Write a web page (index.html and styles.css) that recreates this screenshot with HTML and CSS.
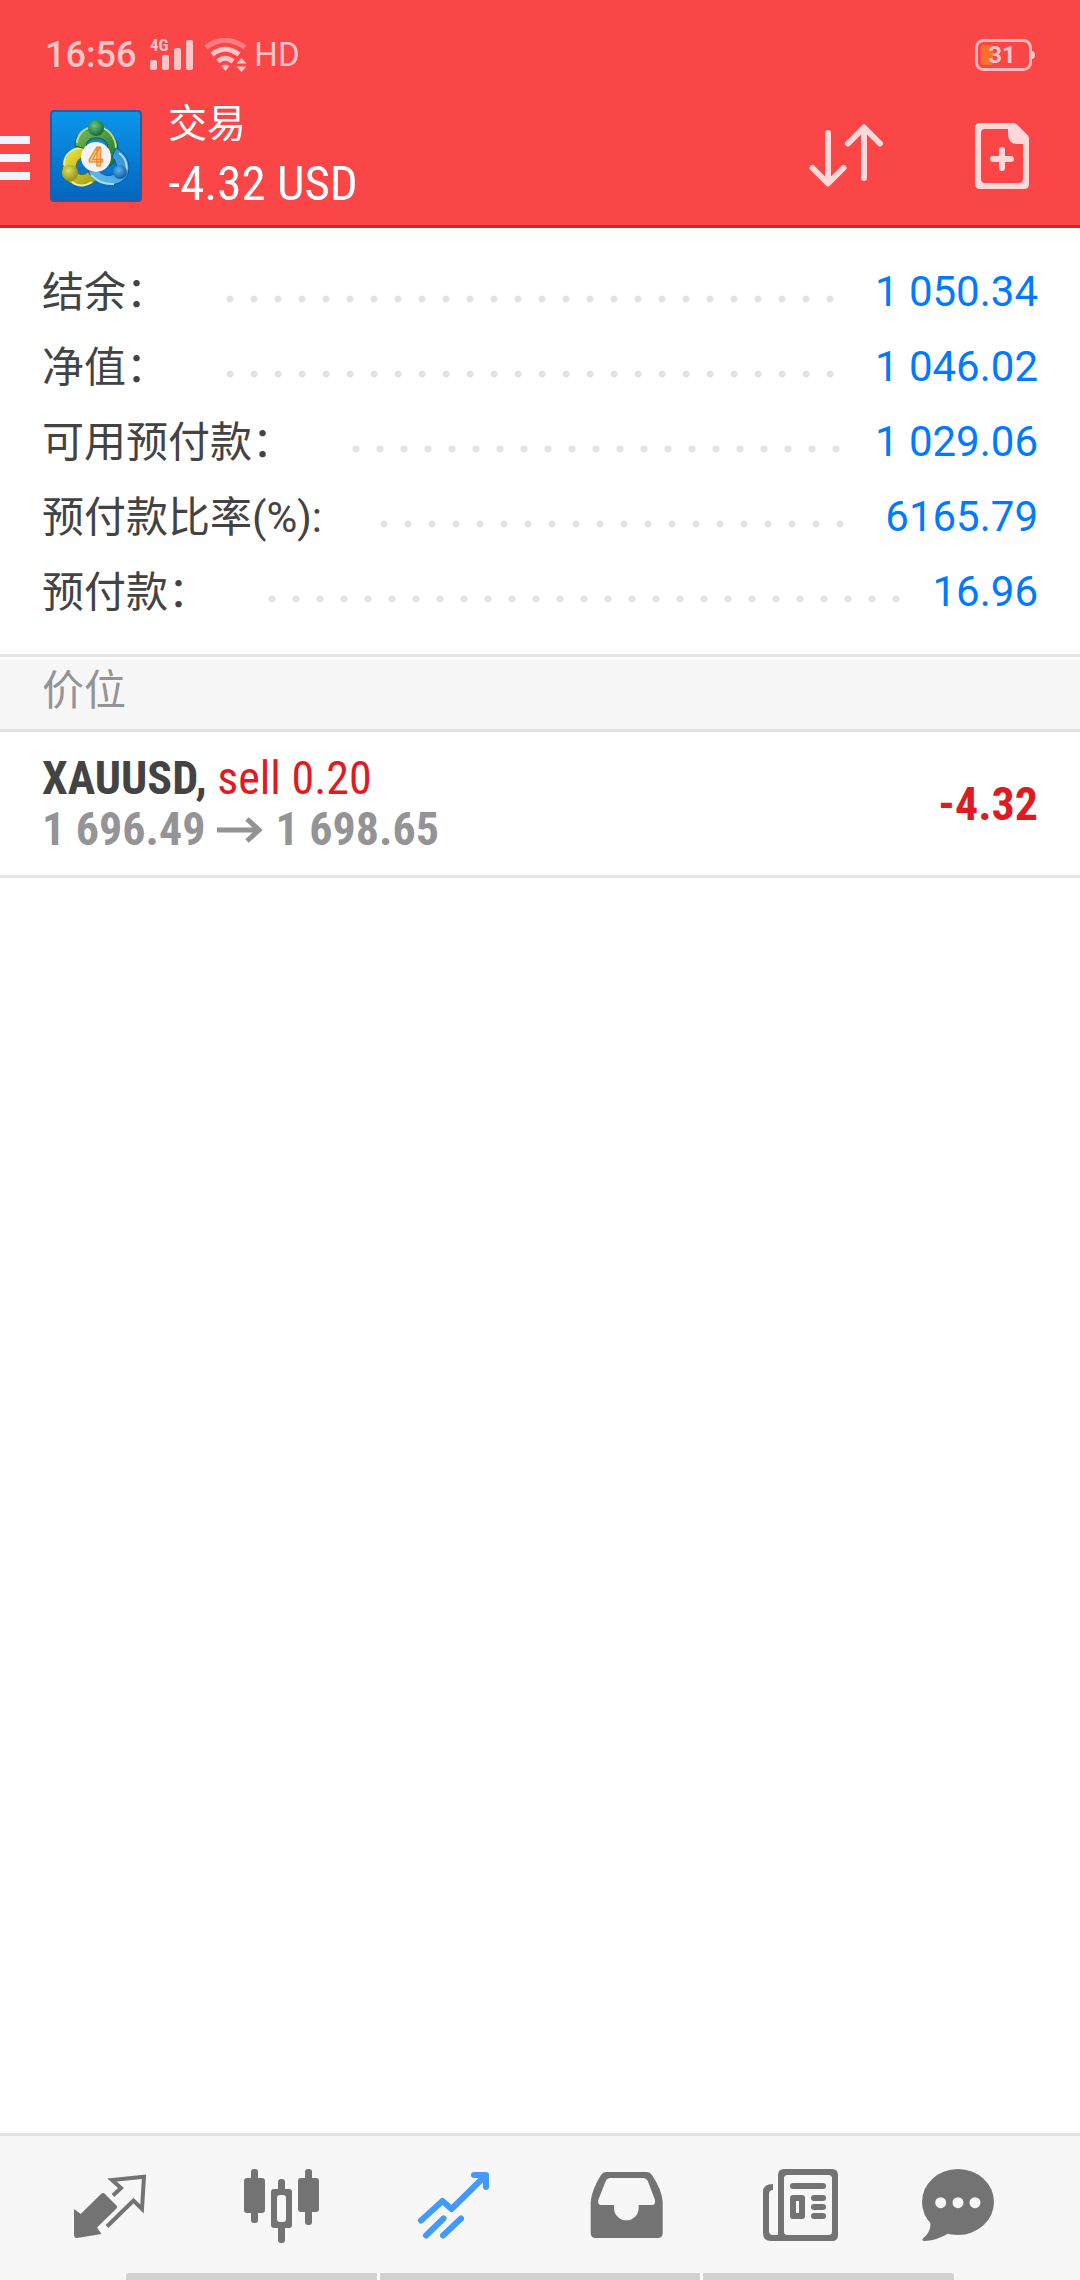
FILE: index.html
```html
<!DOCTYPE html>
<html lang="zh-CN">
<head>
<meta charset="utf-8">
<meta name="viewport" content="width=device-width, initial-scale=1">
<title>交易</title>
<link rel="stylesheet" href="styles.css">
</head>
<body>
<div class="app">
  <header class="header">
    <div class="status">
      <span class="status-time">16:56</span>
      <svg class="status-signal" viewBox="0 -5 44 42" aria-hidden="true">
        <text x="0" y="12" class="signal-label">4G</text>
        <rect x="0" y="21" width="7" height="10" rx="2"/>
        <rect x="12" y="16" width="7" height="15" rx="2"/>
        <rect x="24" y="9" width="7" height="22" rx="2"/>
        <rect x="36" y="1" width="7" height="30" rx="2"/>
      </svg>
      <svg class="status-wifi" viewBox="0 0 44 34" aria-hidden="true">
        <path class="wifi-weak" d="M2 9.500Q21 -5 41 9.500"/>
        <path class="wifi-arc" d="M8 16.500Q21 6 35 16.500"/>
        <path class="wifi-arc" d="M14 23.500Q21 17 29 23.500"/>
        <path d="M17.500 28Q21.500 25.500 25.500 28L21.500 33ZM32.500 25.500L37.500 20L42.500 25.500ZM32.500 28.500H42.500L37.500 34Z"/>
      </svg>
      <span class="status-hd">HD</span>
      <svg class="status-battery" viewBox="0 0 60 34" aria-label="31%">
        <rect x="6" y="7" width="12" height="20" rx="2" class="battery-level"/>
        <rect x="1.500" y="2.500" width="54" height="29" rx="7" class="battery-shell"/>
        <path d="M57 13Q60 13.500 60 17T57 21Z"/>
        <text x="27" y="25" text-anchor="middle" class="battery-text">31</text>
      </svg>
    </div>
    <div class="toolbar">
      <button class="menu-button" type="button" aria-label="菜单"><span class="menu-line"></span><span class="menu-line"></span><span class="menu-line"></span></button>
      <svg class="logo" viewBox="0 0 92 92" aria-hidden="true">
        <defs>
          <linearGradient id="sky" x1="0" y1="0" x2="0" y2="1"><stop offset="0" stop-color="#0a97ea"/><stop offset="1" stop-color="#0565bd"/></linearGradient>
          <linearGradient id="green" x1="0" y1="0" x2="1" y2="1"><stop offset="0" stop-color="#79bd5a"/><stop offset="1" stop-color="#17702e"/></linearGradient>
          <linearGradient id="yellow" x1="0" y1="0" x2="1" y2="1"><stop offset="0" stop-color="#f3e83c"/><stop offset="1" stop-color="#9c9b1b"/></linearGradient>
          <linearGradient id="blue" x1="1" y1="0" x2="0" y2="1"><stop offset="0" stop-color="#288cd8"/><stop offset="1" stop-color="#6cc0f0"/></linearGradient>
          <radialGradient id="greenBall" cx=".4" cy=".35" r=".7"><stop offset="0" stop-color="#6cc486"/><stop offset="1" stop-color="#14632b"/></radialGradient>
          <radialGradient id="yellowBall" cx=".4" cy=".35" r=".7"><stop offset="0" stop-color="#dfdf62"/><stop offset="1" stop-color="#8b8a14"/></radialGradient>
          <radialGradient id="blueBall" cx=".4" cy=".35" r=".7"><stop offset="0" stop-color="#5bb4ee"/><stop offset="1" stop-color="#0a569f"/></radialGradient>
        </defs>
        <rect x="1" y="1" width="90" height="90" rx="3" fill="url(#sky)" stroke="#2c5a9c" stroke-width="2"/>
        <path d="M36 37C18 37 11 53 13 64C17 77 39 80 46 70L40 59C35 68 26 65 26 58C26 50 32 46 36 46Z" fill="url(#yellow)" stroke="#5c661b"/>
        <path d="M14 55C14 43 24 38 32 38M22 72Q31 79 42 72" fill="none" stroke="#eef0a0" stroke-width="2"/>
        <path d="M25 36C23 14 66 11 68 38C68 48 64 54 59 56L55 48C61 36 57 28 46 28C37 28 36 34 36 39Z" fill="url(#green)" stroke="#155a27"/>
        <path d="M27 33C28 20 39 17 46 17C57 17 66 26 66 39" fill="none" stroke="#b5dc94" stroke-width="2"/>
        <path d="M66 38C77 43 82 56 77 66C70 78 46 79 38 61H49C54 67 64 67 67 61C67 54 65 49 62 47Z" fill="url(#blue)" stroke="#0b579d"/>
        <path d="M69 43Q80 51 75 66M41 65Q50 75 64 74" fill="none" stroke="#aadcf7" stroke-width="2"/>
        <circle cx="46" cy="18" r="8" fill="url(#greenBall)"/>
        <circle cx="20" cy="63" r="8" fill="url(#yellowBall)"/>
        <circle cx="70" cy="62" r="7" fill="url(#blueBall)"/>
        <circle cx="46" cy="47" r="15" fill="#f3f3f5"/>
        <text x="46" y="56" text-anchor="middle" class="logo-text">4</text>
      </svg>
      <div class="heading">
        <h1 class="heading-title">交易</h1>
        <p class="heading-profit">-4.32 USD</p>
      </div>
      <div class="actions">
        <button class="action" type="button" aria-label="排序">
          <svg class="action-icon" viewBox="0 0 80 80" aria-hidden="true"><path class="action-line" d="M22 17V67M6.500 52L22 67.500L37.500 52M58 62V12M42 27.500L58 11.500L74 27.500"/></svg>
        </button>
        <button class="action" type="button" aria-label="新订单">
          <svg class="action-icon" viewBox="0 0 80 80" aria-hidden="true">
            <path class="action-fill" fill-rule="evenodd" d="M18 7H51.500Q53.500 7 55 8.500L65.500 19Q67 20.500 67 22.500V68Q67 73 62 73H18Q13 73 13 68V12Q13 7 18 7ZM23 13Q19 13 19 17V63Q19 67 23 67H57Q61 67 61 63V28H56Q46 28 46 18V13Z"/>
            <path class="action-line" d="M31 43H49M40 34V52"/>
          </svg>
        </button>
      </div>
    </div>
  </header>

  <main class="main">
    <dl class="account">
      <div class="account-row"><dt>结余：</dt><dd>1 050.34</dd></div>
      <div class="account-row"><dt>净值：</dt><dd>1 046.02</dd></div>
      <div class="account-row"><dt>可用预付款：</dt><dd>1 029.06</dd></div>
      <div class="account-row"><dt>预付款比率(%):</dt><dd>6165.79</dd></div>
      <div class="account-row"><dt>预付款：</dt><dd>16.96</dd></div>
    </dl>
    <h2 class="section-title">价位</h2>
    <ul class="orders">
      <li class="order">
        <div class="order-info">
          <p class="order-line"><b class="order-symbol">XAUUSD,</b> <span class="order-side">sell 0.20</span></p>
          <p class="order-line order-prices"><span>1 696.49</span><svg class="order-arrow" viewBox="0 0 46 26" aria-label="至"><path d="M0 13H42M30 2L42 13L30 24"/></svg><span>1 698.65</span></p>
        </div>
        <strong class="order-profit">-4.32</strong>
      </li>
    </ul>
  </main>

  <nav class="tabs">
    <div class="tab-list">
      <button class="tab" type="button" aria-label="行情">
        <svg class="tab-icon" viewBox="0 0 96 96" aria-hidden="true"><path d="M12 49L18.700 54L39 34Q41 32 43 34L54 45Q56 47 54 49L35 67.500L39.500 74L15 78Q12 78 12 75Z"/><path class="thin" d="M51 35.500L59 28L50 20L82 16.700L80 49L71.500 40.500L45 66.500"/></svg>
      </button>
      <button class="tab" type="button" aria-label="图表">
        <svg class="tab-icon" viewBox="0 0 96 96" aria-hidden="true">
          <rect x="10" y="18" width="21" height="35" rx="3"/><rect x="17" y="9" width="7" height="54" rx="3"/>
          <rect x="37" y="29" width="21" height="39" rx="3"/><rect x="44" y="19" width="7" height="64" rx="3"/><rect class="hole" x="43" y="35" width="9" height="27" rx="3"/>
          <rect x="64" y="18" width="21" height="34" rx="3"/><rect x="71" y="9" width="7" height="56" rx="3"/>
        </svg>
      </button>
      <button class="tab tab-active" type="button" aria-label="交易" aria-current="page">
        <svg class="tab-icon" viewBox="0 0 96 96" aria-hidden="true"><path class="thick" d="M15 60.500L36.500 41L45.500 49L78 17"/><path class="thick" d="M68 15H80V27"/><path class="thick" d="M20 75.500L37.500 58.500M37 75.500L55 58.500"/></svg>
      </button>
      <button class="tab" type="button" aria-label="历史">
        <svg class="tab-icon" viewBox="0 0 96 96" aria-hidden="true"><path fill-rule="evenodd" d="M28 12H69Q72 12 74 15Q84 30 84.700 42V73Q84.700 78 79.700 78H17.700Q12.700 78 12.700 73V42Q13.500 30 23 15Q25 12 28 12ZM32 18Q29 18 27.500 21.500L20.300 40Q19.500 45 23 45H36V48A12.300 12.300 0 0 0 60.700 48V45H74Q77.800 45 77 40L70 21.500Q68.500 18 65 18Z"/></svg>
      </button>
      <button class="tab" type="button" aria-label="新闻">
        <svg class="tab-icon" viewBox="0 0 96 96" aria-hidden="true">
          <path fill-rule="evenodd" d="M34 9H82Q88 9 88 15V75Q88 81 82 81H28V15Q28 9 34 9ZM37.500 15Q34 15 34 18.500V71.500Q34 75 37.500 75H78.500Q82 75 82 71.500V18.500Q82 15 78.500 15Z"/>
          <path d="M23 24V30Q19 30 19 34V71Q19 75 23 75H30V81H21Q13 81 13 73V32Q13 24 23 24Z"/>
          <rect x="40" y="23" width="36" height="6" rx="3"/>
          <path fill-rule="evenodd" d="M43 35H52Q55 35 55 38V56Q55 59 52 59H43Q40 59 40 56V38Q40 35 43 35ZM46 41V53H49V41Z"/>
          <rect x="61" y="35" width="15" height="6" rx="3"/><rect x="61" y="44" width="15" height="6" rx="3"/><rect x="61" y="53" width="15" height="6" rx="3"/>
        </svg>
      </button>
      <button class="tab" type="button" aria-label="消息">
        <svg class="tab-icon" viewBox="0 0 96 96" aria-hidden="true"><ellipse cx="36" cy="42" rx="36" ry="33"/><path d="M8.500 63Q9 72 1 78.500Q-1 81 3 81Q16 80 27 73L20 60L7 60Z"/><circle class="hole" cx="18.700" cy="42.700" r="5.500"/><circle class="hole" cx="36" cy="42.700" r="5.500"/><circle class="hole" cx="53" cy="42.700" r="5.500"/></svg>
      </button>
    </div>
    <div class="gesture-hints" aria-hidden="true"><span class="hint"></span><span class="hint"></span><span class="hint"></span></div>
  </nav>
</div>
</body>
</html>
```
FILE: styles.css
```css
* {
  box-sizing: border-box;
}

body,
h1,
h2,
p,
dl,
dd,
ul {
  margin: 0;
  padding: 0;
}

body {
  background: #fff;
  color: #434343;
  font-family: Roboto, "Noto Sans CJK SC", sans-serif;
  font-size: 42px;
}

button {
  padding: 0;
  border: 0;
  background: none;
}

svg {
  display: block;
  flex: none;
}

.app {
  display: flex;
  flex-direction: column;
  min-height: 100vh;
}

/* Header */

.header {
  background: #fb4648;
  border-bottom: 3px solid #dd1f24;
  color: #fff;
}

.status {
  display: flex;
  align-items: center;
  padding: 34px 45px 11px;
  color: #ffc4c5;
  fill: #ffc4c5;
  font-size: 36px;
  line-height: 42px;
}

.status-time {
  font-weight: 500;
}

.status-hd {
  font-size: 33px;
}

.status-signal {
  width: 44px;
  height: 42px;
  margin-left: 14px;
}

.signal-label {
  font-family: "Roboto Condensed", "Liberation Sans Narrow", sans-serif;
  font-size: 17px;
  font-weight: 700;
}

.status-wifi {
  width: 44px;
  height: 34px;
  margin: 0 6px 0 10px;
}

.wifi-weak,
.wifi-arc {
  fill: none;
  stroke: #ffc4c5;
  stroke-width: 5;
}

.wifi-weak {
  stroke: #fe7e80;
}

.status-battery {
  width: 60px;
  height: 34px;
  margin-left: auto;
}

.battery-level {
  fill: #fb702d;
}

.battery-shell {
  fill: none;
  stroke: #ffb9ba;
  stroke-width: 3;
}

.battery-text {
  font-size: 24px;
  font-weight: 700;
}

.toolbar {
  display: flex;
  align-items: center;
  min-height: 138px;
  padding-right: 38px;
}

.menu-button {
  display: grid;
  gap: 10px;
  width: 30px;
  margin: 4px 20px 0 0;
}

.menu-line {
  height: 8px;
  background: #eff4ff;
}

.logo {
  width: 92px;
  height: 92px;
}

.logo-text {
  fill: #ffc37c;
  stroke: #ef7d20;
  font-size: 26px;
  font-weight: 700;
}

.heading {
  flex: 1;
  margin-left: 26px;
  white-space: nowrap;
}

.heading-title {
  font-size: 39px;
  font-weight: 400;
  line-height: 56px;
}

.heading-profit {
  font-family: "Roboto Condensed", "Liberation Sans Narrow", sans-serif;
  font-size: 49px;
  line-height: 64px;
}

.actions {
  display: flex;
  gap: 76px;
}

.action-icon {
  width: 80px;
  height: 80px;
}

.action-fill {
  fill: #ffd9d9;
}

.action-line {
  fill: none;
  stroke: #ffd9d9;
  stroke-width: 6;
  stroke-linecap: round;
  stroke-linejoin: round;
}

/* Account summary */

.main {
  flex: 1;
}

.account {
  padding: 26px 42px 25px;
}

.account-row {
  display: flex;
  align-items: center;
  height: 75px;
}

/* Dotted leader between the label and the value */
.account-row::before {
  content: "";
  order: 1;
  flex: 1;
  height: 24px;
  margin: 14px 26px 0 50px;
  background: radial-gradient(circle, #e3e3e3 3px, transparent 4px) 0 0 / 24px 24px repeat-x;
}

.account-row dt {
  padding-bottom: 7px;
}

.account-row dd {
  order: 2;
  color: #007aff;
}

.section-title {
  padding: 0 42px 4px;
  border-top: 3px solid #e4e4e4;
  border-bottom: 3px solid #e0e0e0;
  background: #f7f7f7;
  box-shadow: inset 0 2px #fff;
  color: #949496;
  font-size: 42px;
  font-weight: 400;
  line-height: 68px;
}

/* Open orders */

.orders {
  list-style: none;
}

.order {
  display: flex;
  align-items: center;
  justify-content: space-between;
  padding: 21px 42px 20px;
  border-bottom: 3px solid #e4e4e4;
  font-family: "Roboto Condensed", "Liberation Sans Narrow", sans-serif;
  font-size: 46px;
  line-height: 51px;
}

.order-side,
.order-profit {
  color: #df1b22;
}

.order-prices {
  display: flex;
  align-items: center;
  gap: 12px;
  color: #949496;
  font-weight: 700;
}

.order-arrow {
  width: 46px;
  height: 26px;
  fill: none;
  stroke: #949496;
  stroke-width: 5;
}

/* Bottom tabs */

.tabs {
  border-top: 3px solid #e3e3e3;
  background: #f7f7f7;
}

.tab-list {
  display: grid;
  grid-template-columns: repeat(6, 1fr);
  padding: 24px 24px 17px;
}

.tab {
  display: flex;
  justify-content: center;
}

.tab-icon {
  width: 96px;
  height: 96px;
  fill: #737373;
  stroke: none;
}

.hole {
  fill: #f7f7f7;
}

.thin,
.thick {
  fill: none;
  stroke: #737373;
  stroke-width: 4;
}

.thick {
  stroke: #429aff;
  stroke-width: 6;
  stroke-linecap: round;
  stroke-linejoin: round;
}

.gesture-hints {
  display: grid;
  grid-template-columns: 250fr 320fr 250fr;
  gap: 3px;
  height: 7px;
  margin: 0 126px;
  overflow: hidden;
  border-radius: 3px 3px 0 0;
  background: #fff;
}

.hint {
  background: #d2d2d2;
}
```
